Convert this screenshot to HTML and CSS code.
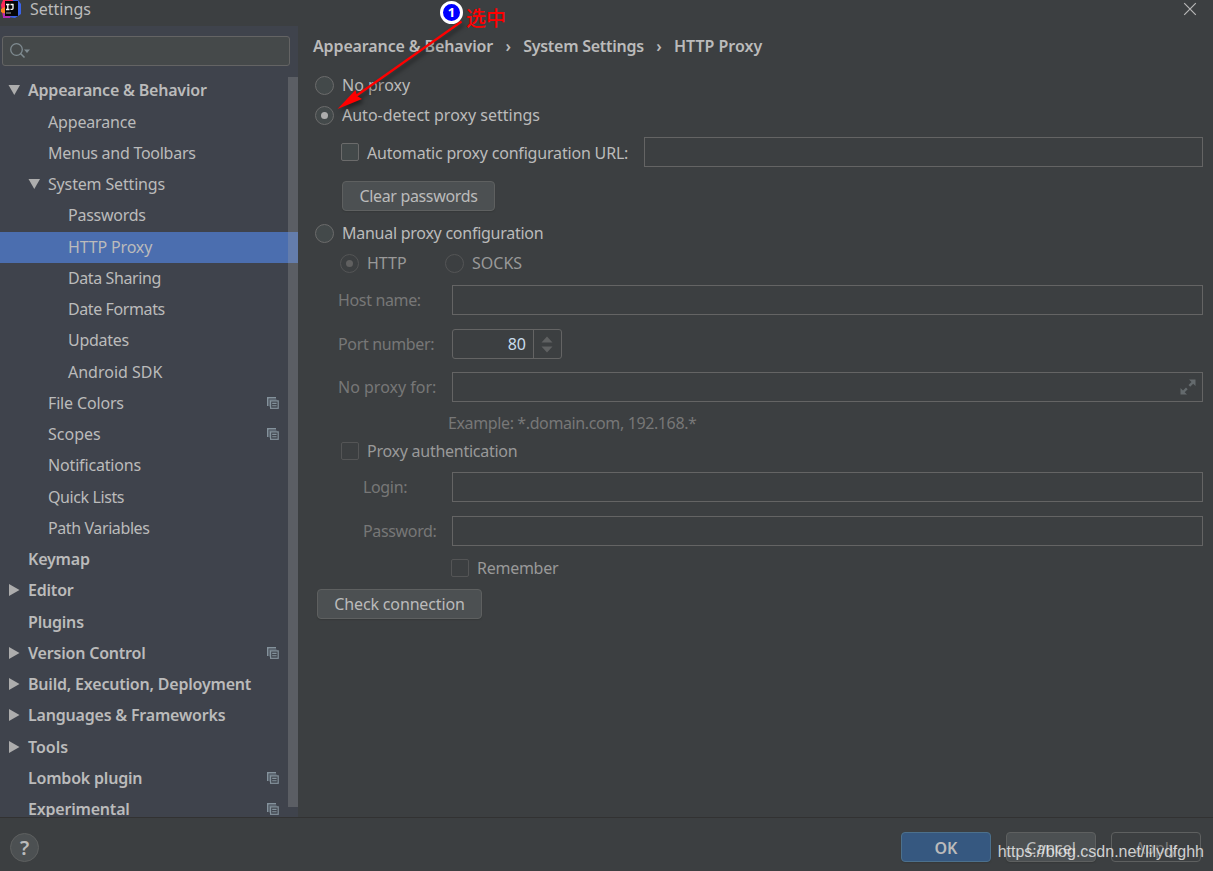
FILE: index.html
```html
<!DOCTYPE html>
<html lang="en">
<head>
    <meta charset="UTF-8">
    <title>Settings</title>
    <link rel="stylesheet" href="styles.css">
</head>
<body>
    <!-- shared icons -->
    <svg class="defs" width="0" height="0">
        <symbol id="copy" viewBox="0 0 12 12">
            <path d="M.75 9V.75H9" fill="none" stroke="#84929c" stroke-width="1.5"/>
            <path d="M2.8 9.5V2.8H9.5" fill="none" stroke="#67737d" stroke-width="1.2"/>
            <rect x="3.6" y="3.9" width="7.6" height="7.4" fill="#41464f" stroke="#84929c" stroke-width="1.2"/>
            <path d="M5.2 6.400h4.400M5.200 8.700h4.400" stroke="#84929c" stroke-width="1.1"/>
        </symbol>
        <symbol id="down" viewBox="0 0 12 12"><path d="M.5 1h11.500L6.300 11z" fill="#adadad"/></symbol>
        <symbol id="right" viewBox="0 0 12 12"><path d="M1 0v12l10.500-6z" fill="#adadad"/></symbol>
    </svg>

    <div class="window">
        <div class="titlebar">
            <svg class="logo" width="22" height="19" viewBox="0 0 22 19">
                <path d="M3 0h10l3 9-4 8H3L1 5z" fill="#fe2857"/>
                <path d="M1 9l4-2v7l-4-2z" fill="#fc801d"/>
                <path d="M13 0h5l3 4v10l-6 4-7-1z" fill="#3b63e8"/>
                <path d="M3 13l8 2-1 3H3z" fill="#b22bb5"/>
                <rect x="5" y="1" width="13" height="15" fill="#050505"/>
                <path d="M6 4.500h3.500M7.800 4.500v5M6 9.500h3.500M10.500 4.500h3M13 4v4.200q0 1.500-2.500 1.200" fill="none" stroke="#fff" stroke-width="1.3"/>
                <path d="M6 13h5" stroke="#aaa"/>
            </svg>
            <span>Settings</span>
            <svg class="close" width="14" height="14" viewBox="0 0 14 14"><path d="M1.200 1.200l11.600 11.600M12.800 1.200L1.200 12.800" stroke="#b8b8b8" stroke-width="1.200"/></svg>
        </div>

        <div class="main">
            <div class="sidebar">
                <div class="search">
                    <svg width="22" height="18" viewBox="0 0 22 18">
                        <circle cx="6.500" cy="7.500" r="5.800" fill="none" stroke="#7f8b91" stroke-width="1.300"/>
                        <path d="M10.500 11.500l4 4" stroke="#7f8b91" stroke-width="1.600"/>
                        <path d="M14 7.500h6l-3 3.500z" fill="#7f8b91"/>
                    </svg>
                </div>
                <div class="tree">
                    <div class="node bold"><svg class="tri"><use href="#down"/></svg>Appearance &amp; Behavior</div>
                    <div class="node l2">Appearance</div>
                    <div class="node l2 tight">Menus and Toolbars</div>
                    <div class="node l2"><svg class="tri"><use href="#down"/></svg>System Settings</div>
                    <div class="node l3 tight">Passwords</div>
                    <div class="node l3 selected">HTTP Proxy</div>
                    <div class="node l3 tighter">Data Sharing</div>
                    <div class="node l3 tighter">Date Formats</div>
                    <div class="node l3 tight">Updates</div>
                    <div class="node l3 wide">Android SDK</div>
                    <div class="node l2">File Colors<svg class="copy"><use href="#copy"/></svg></div>
                    <div class="node l2 wide">Scopes<svg class="copy"><use href="#copy"/></svg></div>
                    <div class="node l2">Notifications</div>
                    <div class="node l2 tighter">Quick Lists</div>
                    <div class="node l2 tighter">Path Variables</div>
                    <div class="node bold">Keymap</div>
                    <div class="node bold"><svg class="tri"><use href="#right"/></svg>Editor</div>
                    <div class="node bold">Plugins</div>
                    <div class="node bold"><svg class="tri"><use href="#right"/></svg>Version Control<svg class="copy"><use href="#copy"/></svg></div>
                    <div class="node bold"><svg class="tri"><use href="#right"/></svg>Build, Execution, Deployment</div>
                    <div class="node bold"><svg class="tri"><use href="#right"/></svg>Languages &amp; Frameworks</div>
                    <div class="node bold wide"><svg class="tri"><use href="#right"/></svg>Tools</div>
                    <div class="node bold">Lombok plugin<svg class="copy"><use href="#copy"/></svg></div>
                    <div class="node bold">Experimental<svg class="copy"><use href="#copy"/></svg></div>
                </div>
                <div class="scrollbar"></div>
            </div>

            <div class="content">
                <div class="breadcrumb">
                    <span>Appearance &amp; Behavior</span><i>›</i><span class="tight">System Settings</span><i>›</i><span class="wide">HTTP Proxy</span>
                </div>

                <div class="row first"><span class="radio"></span>No proxy</div>
                <div class="row"><span class="radio checked"></span>Auto-detect proxy settings</div>
                <div class="row indent url"><span class="check"></span><span class="url-label">Automatic proxy configuration URL:</span><div class="field"></div></div>
                <div class="row indent clear"><div class="btn clear-btn">Clear passwords</div></div>

                <div class="row manual"><span class="radio"></span><span class="tight">Manual proxy configuration</span></div>
                <div class="row indent dim">
                    <span class="protocol"><span class="radio checked"></span>HTTP</span>
                    <span class="radio"></span>SOCKS
                </div>
                <div class="row host"><label>Host name:</label><div class="field"></div></div>
                <div class="row port">
                    <label>Port number:</label>
                    <div class="spinner">
                        <span>80</span>
                        <svg width="27" height="28" viewBox="0 0 27 28"><path d="M7.500 12.500h11L13 6.500zM7.500 16.500h11L13 22.500z" fill="#5f6162"/></svg>
                    </div>
                </div>
                <div class="row noproxy">
                    <label class="wide">No proxy for:</label>
                    <div class="field">
                        <svg width="16" height="16" viewBox="0 0 16 16"><path d="M9 .5h6.500V7l-2.300-2.300-3 3-1.700-1.700 3-3zM.500 9v6.500H7l-2.300-2.300 3-3L6 8.500l-3 3z" fill="#646a6d"/></svg>
                    </div>
                </div>
                <div class="row example">Example: *.domain.com, 192.168.*</div>
                <div class="row indent dim"><span class="check"></span><span class="tight">Proxy authentication</span></div>
                <div class="row login"><label class="sub">Login:</label><div class="field"></div></div>
                <div class="row password"><label class="sub">Password:</label><div class="field"></div></div>
                <div class="row remember dim"><span class="check"></span><span class="tight">Remember</span></div>
                <div class="row connection"><div class="btn connection-btn">Check connection</div></div>
            </div>
        </div>

        <div class="footer">
            <div class="help">?</div>
            <div class="buttons">
                <div class="btn ok">OK</div>
                <div class="btn">Cancel</div>
                <div class="btn disabled">Apply</div>
            </div>
        </div>
    </div>

    <!-- annotation over the form -->
    <svg class="arrow" width="140" height="110" viewBox="330 10 140 110">
        <path d="M461.500 21.500L356 96" stroke="#f00" stroke-width="2.200"/>
        <path d="M337.500 109L355.500 90 357 96 362 99z" fill="#f00"/>
    </svg>
    <div class="step">1</div>
    <div class="note">选中</div>
    <div class="watermark">https://blog.csdn.net/lilydfghh</div>
</body>
</html>
```
FILE: styles.css
```css
body {
    margin: 0;
    overflow: hidden;
    background: #3c3f41;
    color: #bbbbbb;
    font: 16px/30px "Noto Sans", "Open Sans", sans-serif;
    white-space: nowrap;
}
* {
    box-sizing: border-box;
}
svg {
    flex: none;
}
.defs {
    position: absolute;
}
.window {
    display: flex;
    flex-direction: column;
    height: 871px;
}
.titlebar {
    display: flex;
    align-items: flex-start;
    height: 26px;
    line-height: 19px;
}
.logo {
    margin-right: 8px;
}
.close {
    margin: 2px 16px 0 auto;
}
.main {
    display: flex;
    height: 791px;
}

/* sidebar */
.sidebar {
    position: relative;
    width: 298px;
    flex: none;
    overflow: hidden;
    background: #3f434c;
}
.search {
    display: flex;
    align-items: center;
    width: 288px;
    height: 30px;
    margin: 10px 0 0 2px;
    padding-left: 7px;
    border: 1px solid #646464;
    border-radius: 3px;
    background: #45494a;
}
.tree {
    margin-top: 9.75px;
}
.node {
    display: flex;
    align-items: center;
    height: 31.25px;
    padding: 0 19px 2px 28px;
    letter-spacing: -.16px;
}
.bold {
    font-weight: 600;
    letter-spacing: -.2px;
}
.l2 {
    padding-left: 48px;
}
.l3 {
    padding-left: 68px;
}
.selected {
    background: #4b6eaf;
}
.tri {
    width: 12px;
    height: 12px;
    margin: 0 8px 0 -20px;
}
.copy {
    width: 12px;
    height: 12px;
    margin-left: auto;
}
.scrollbar {
    position: absolute;
    top: 51px;
    right: 0;
    width: 10px;
    height: 730px;
    background: rgba(166, 166, 166, .28);
}

/* form */
.content {
    flex: 1;
    padding: 5px 10px 0 15px;
}
.breadcrumb {
    display: flex;
    height: 30px;
    font-weight: 600;
    letter-spacing: -.13px;
}
.breadcrumb i {
    width: 30px;
    text-align: center;
    font-style: normal;
}
.row {
    display: flex;
    align-items: center;
    height: 30px;
}
.first {
    margin-top: 9px;
}
.indent {
    padding-left: 25px;
}
.radio {
    display: flex;
    align-items: center;
    justify-content: center;
    width: 19px;
    height: 19px;
    margin: 0 8px 0 2px;
    border: 1px solid #6b6b6b;
    border-radius: 50%;
    background: #43494a;
}
.checked::after {
    content: "";
    width: 7px;
    height: 7px;
    border-radius: 50%;
    background: #adadad;
}
.check {
    width: 18px;
    height: 18px;
    margin: 0 8px 0 3px;
    border: 1px solid #6b6b6b;
    border-radius: 2px;
    background: #43494a;
}
.dim {
    color: #999999;
}
.dim .radio, .dim .check {
    border-color: #545556;
    background: none;
}
.dim .checked::after {
    background: #606060;
}
.protocol {
    display: flex;
    align-items: center;
    width: 105px;
}
.field {
    display: flex;
    align-items: center;
    justify-content: flex-end;
    flex: 1;
    height: 30px;
    padding-right: 6px;
    border: 1px solid #646464;
}
.url {
    margin-top: 7px;
}
.url-label {
    width: 277px;
    padding-top: 1px;
    letter-spacing: -.18px;
}
.clear {
    margin-top: 14px;
}
.btn {
    height: 30px;
    border: 1px solid #5e6060;
    border-radius: 4px;
    background: #4c5052;
    line-height: 29px;
    text-align: center;
    box-shadow: 0 1px 1px #36393a;
}
.clear-btn {
    width: 153px;
    margin-left: 4px;
    letter-spacing: -.35px;
}
.manual, .host, .remember {
    margin-top: 7px;
}
.row label {
    width: 139px;
    padding: 0 0 1px 25px;
    color: #777777;
    letter-spacing: -.35px;
}
.row label.sub {
    padding-left: 50px;
}
.port, .password {
    margin-top: 14px;
}
.spinner {
    display: flex;
    width: 110px;
    height: 30px;
    border: 1px solid #646464;
    border-radius: 3px;
    line-height: 29px;
}
.spinner span {
    width: 82px;
    padding-right: 7px;
    border-right: 1px solid #646464;
    color: #c9dcec;
    text-align: right;
}
.noproxy {
    margin-top: 13px;
}
.example {
    height: 26px;
    margin-top: 8px;
    padding-left: 135px;
    color: #777777;
    letter-spacing: -.38px;
}
.login, .connection {
    margin-top: 6px;
}
.remember {
    padding-left: 135px;
}
.connection-btn {
    width: 165px;
    margin-left: 4px;
    letter-spacing: -.15px;
}

/* tracking for single labels */
.tight {
    letter-spacing: -.26px;
}
.node.tighter {
    letter-spacing: -.4px;
}
.wide, .row label.wide {
    letter-spacing: 0;
}

/* footer */
.footer {
    display: flex;
    align-items: flex-start;
    justify-content: space-between;
    height: 54px;
    padding: 15px 12px 0 10px;
    border-top: 1px solid #323232;
}
.help {
    width: 29px;
    height: 29px;
    border: 1px solid #5e6060;
    border-radius: 50%;
    background: #4c5052;
    font-size: 20px;
    font-weight: 600;
    line-height: 27px;
    text-align: center;
}
.buttons {
    display: flex;
    gap: 15px;
    margin-top: -1px;
}
.buttons .btn {
    width: 90px;
    line-height: 31px;
}
.buttons .ok {
    border-color: #4c708c;
    background: #365880;
    font-weight: 600;
}
.buttons .disabled {
    background: none;
    color: #777777;
    box-shadow: none;
}

/* annotation */
.arrow {
    position: absolute;
    left: 330px;
    top: 10px;
    filter: drop-shadow(2px 3px 2px rgba(0, 0, 0, .5));
}
.step {
    position: absolute;
    left: 440px;
    top: 1px;
    width: 23px;
    height: 23px;
    border: 3px solid #fff;
    border-radius: 50%;
    background: #0000ff;
    color: #fff;
    font: bold 13px/17px "Noto Sans", sans-serif;
    text-align: center;
}
.note {
    position: absolute;
    left: 466px;
    top: 7px;
    color: #f00;
    font: 500 20px/22px "Noto Sans CJK SC", sans-serif;
}
.watermark {
    position: absolute;
    right: 9px;
    top: 842px;
    color: rgba(235, 235, 235, .85);
    font: 16px/20px "Liberation Sans", sans-serif;
}
```
